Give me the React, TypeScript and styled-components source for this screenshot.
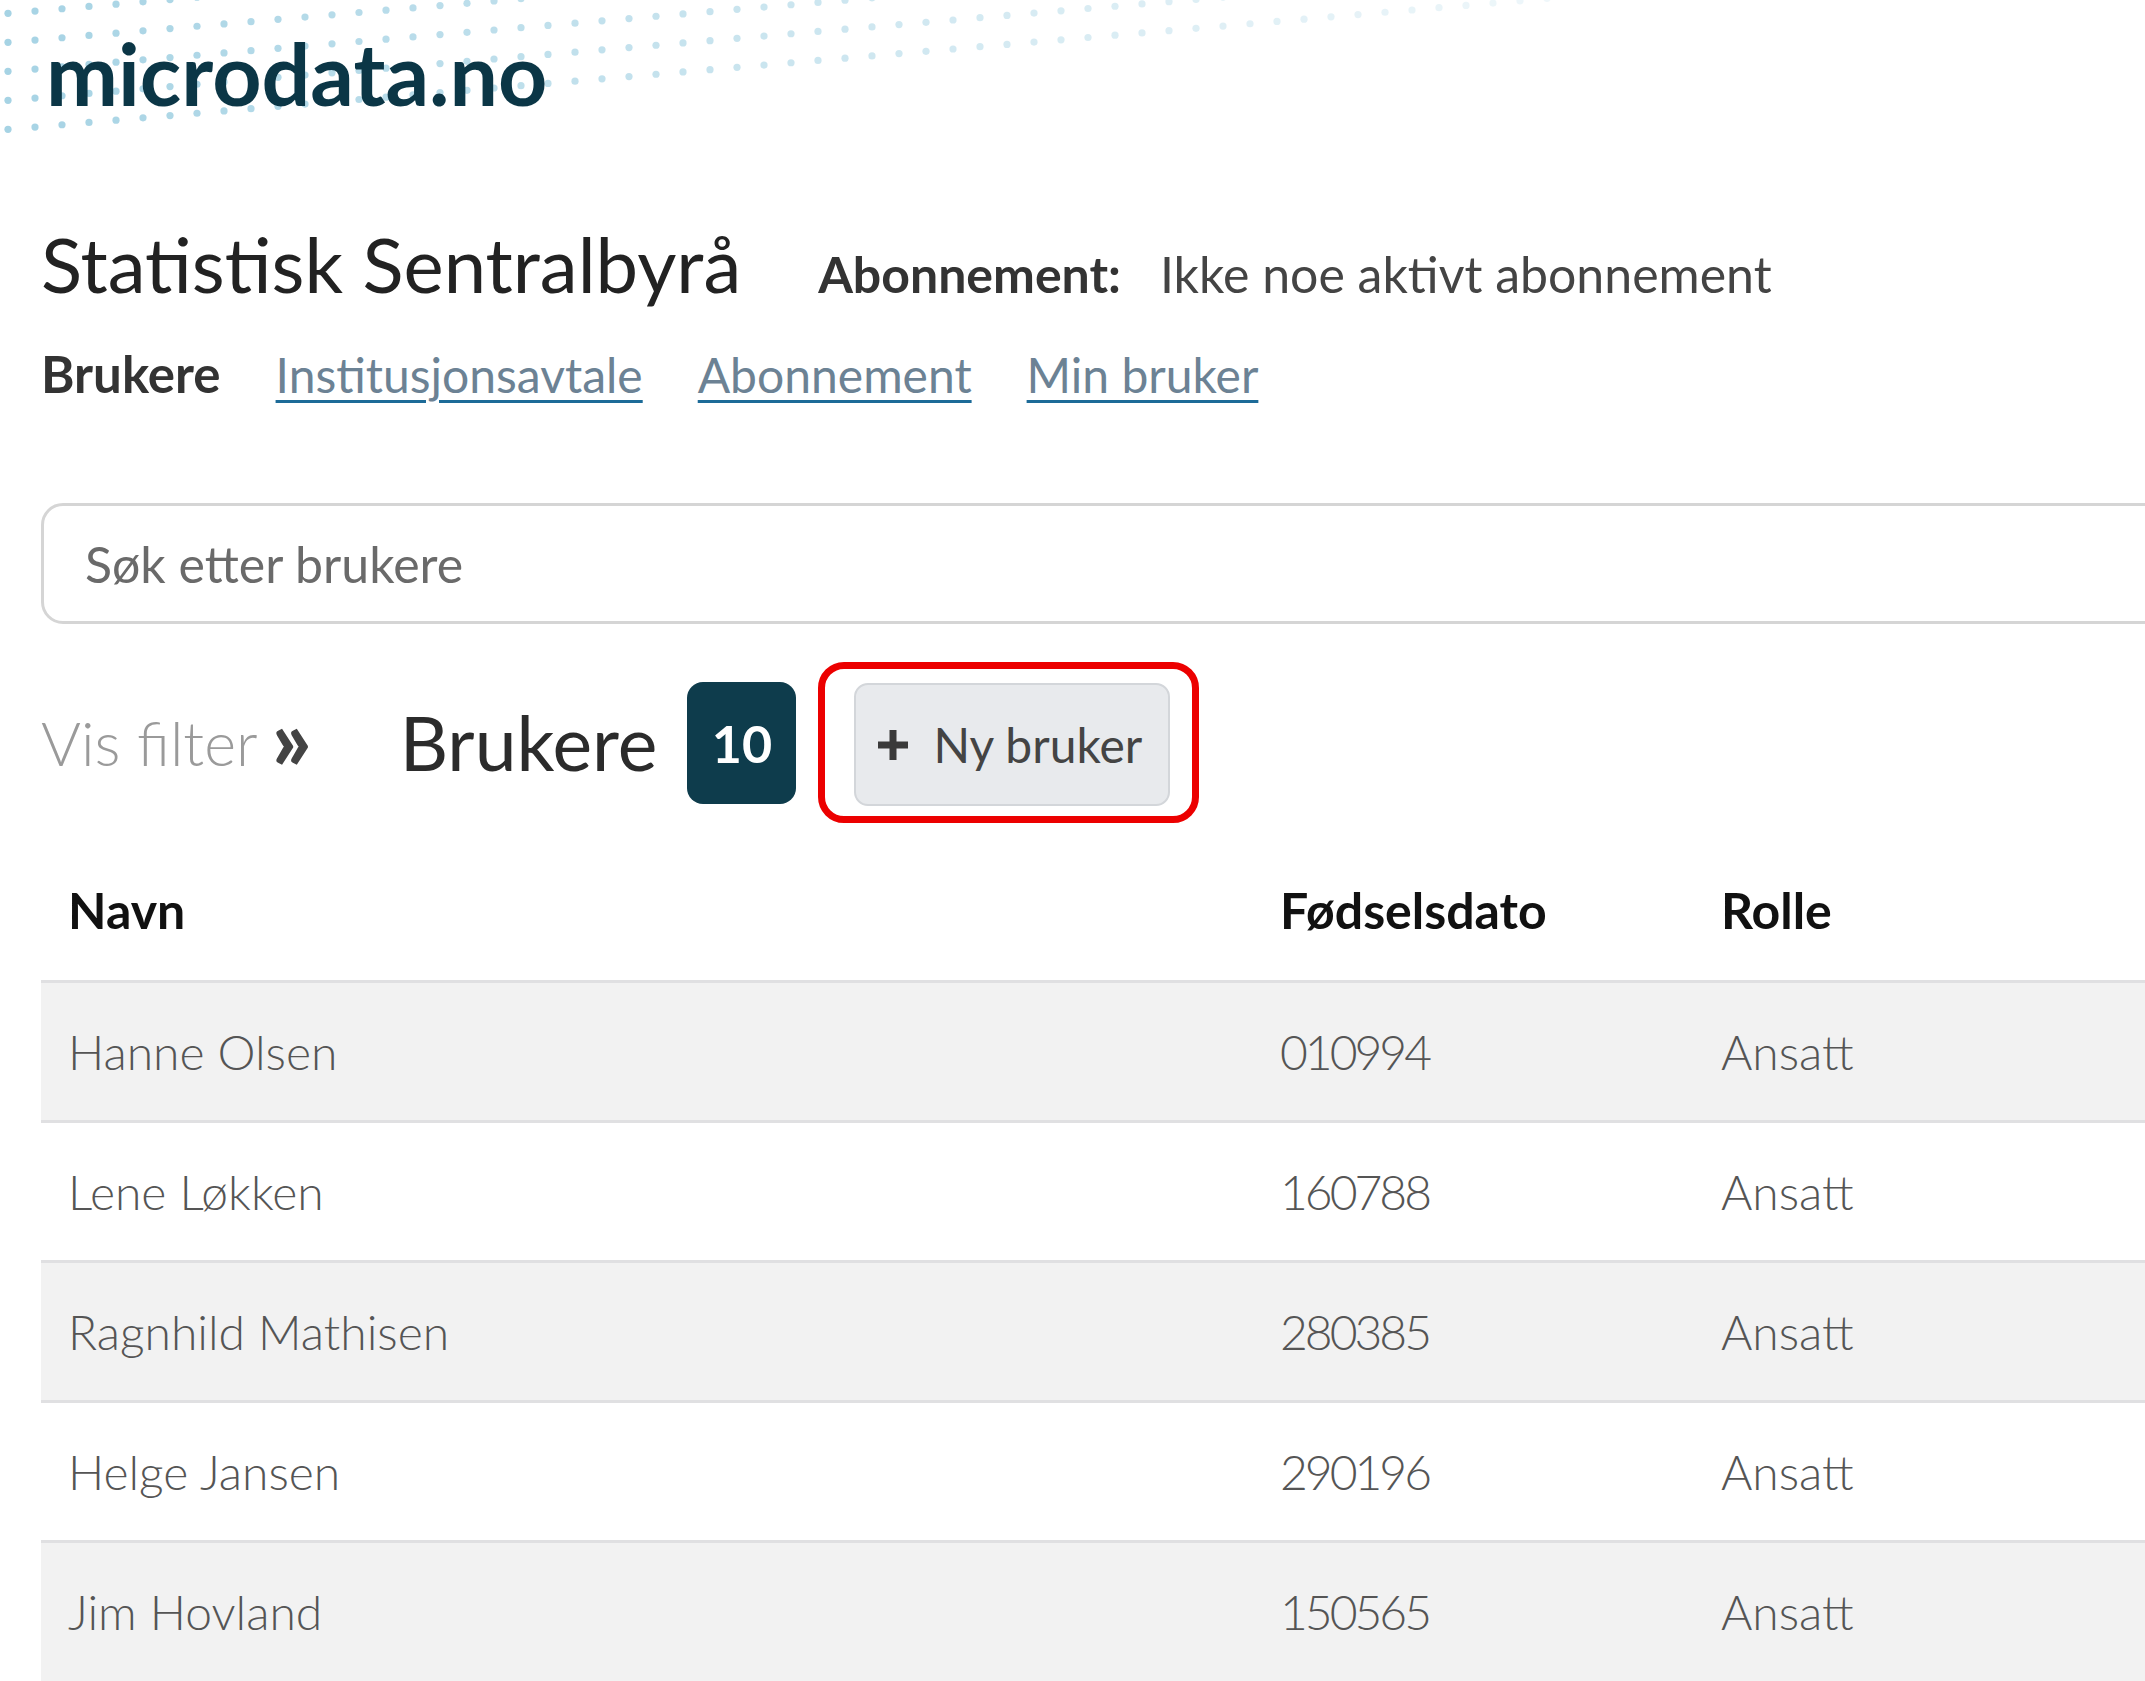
import React from "react";
import styled, { createGlobalStyle } from "styled-components";

const GlobalStyle = createGlobalStyle`
  html, body { margin: 0; padding: 0; background: #ffffff; overflow: hidden; }
  body { font-family: Lato, "Open Sans", sans-serif; color: #333; }
  * { box-sizing: border-box; }
`;

const Page = styled.div`
  position: relative;
  width: 2400px;
  height: 1681px;
  padding-left: 41px;
  overflow: hidden;
`;

const DotsLayer = styled.svg`
  position: absolute;
  top: 0;
  left: 0;
  pointer-events: none;
`;

const Header = styled.header`
  position: relative;
  padding-top: 30px;
  padding-left: 5px;
`;

const Logo = styled.div`
  font-family: Lato, sans-serif;
  font-weight: 700;
  font-size: 86px;
  line-height: 1;
  color: #0b3646;
`;

const OrgRow = styled.div`
  display: flex;
  align-items: baseline;
  margin-top: 110px;
`;

const OrgTitle = styled.h1`
  margin: 0 77px 0 0;
  font-size: 76px;
  font-weight: 400;
  line-height: 1;
  color: #222;
`;

const SubLabel = styled.span`
  font-size: 50px;
  font-weight: 700;
  color: #333;
  line-height: 1;
`;

const SubValue = styled.span`
  margin-left: 39px;
  font-size: 50px;
  font-weight: 400;
  color: #444;
  line-height: 1;
`;

const Nav = styled.nav`
  display: flex;
  align-items: baseline;
  gap: 55px;
  margin-top: 46px;
  line-height: 1;
`;

const NavItem = styled.a<{ $active?: boolean }>`
  font-size: ${(p) => (p.$active ? "51px" : "48px")};
  font-weight: ${(p) => (p.$active ? 700 : 400)};
  color: ${(p) => (p.$active ? "#333" : "#6c8294")};
  text-decoration: ${(p) => (p.$active ? "none" : "underline")};
  text-decoration-color: #1d6b98;
  text-decoration-thickness: 3px;
  text-underline-offset: 7px;
  cursor: pointer;
`;

const Search = styled.input`
  display: block;
  margin-top: 104px;
  width: 100%;
  height: 121px;
  border: 3px solid #d5d5d5;
  border-radius: 22px;
  padding: 0 0 0 41px;
  font-family: Lato, sans-serif;
  font-size: 50px;
  color: #333;
  outline: none;
  background: #fff;
  &::placeholder {
    color: #6a6a6a;
  }
`;

const FilterRow = styled.div`
  display: flex;
  align-items: center;
  margin-top: 38px;
  height: 161px;
`;

const VisFilter = styled.span`
  display: flex;
  align-items: center;
  font-size: 61px;
  font-weight: 300;
  color: #9a9a9a;
  line-height: 1;
`;

const Chevrons = styled.span`
  margin-left: 14px;
  font-size: 86px;
  font-weight: 900;
  color: #444;
  position: relative;
  top: -6px;
`;

const ListTitle = styled.h2`
  margin: 0 0 0 88px;
  font-size: 75px;
  font-weight: 400;
  color: #2b2b2b;
  line-height: 1;
`;

const Badge = styled.span`
  margin-left: 30px;
  width: 109px;
  height: 122px;
  border-radius: 16px;
  background: #0e3c4c;
  color: #fff;
  display: flex;
  align-items: center;
  justify-content: center;
  font-size: 52px;
  font-weight: 700;
`;

const Highlight = styled.div`
  margin-left: 22px;
  border: 7px solid #ec0000;
  border-radius: 26px;
  padding: 14px 22px 10px 29px;
`;

const NewButton = styled.button`
  width: 316px;
  height: 123px;
  background: #e8eaed;
  border: 2px solid #d3d6da;
  border-radius: 14px;
  display: flex;
  align-items: center;
  gap: 22px;
  padding: 0 0 0 19px;
  font-family: Lato, sans-serif;
  font-size: 48px;
  color: #444;
  cursor: pointer;
`;

const Table = styled.table`
  margin-top: 17px;
  width: 100%;
  border-collapse: collapse;
  table-layout: fixed;
`;

const HeadCell = styled.th`
  padding: 45px 0 45px 27px;
  font-size: 50px;
  font-weight: 700;
  color: #111;
  line-height: 1;
  text-align: left;
`;

const Row = styled.tr<{ $shaded: boolean }>`
  height: 140px;
  border-top: 3px solid #e0e0e2;
  background: ${(p) => (p.$shaded ? "#f2f2f2" : "#ffffff")};
`;

const Cell = styled.td<{ $digits?: boolean }>`
  padding: 0 0 0 27px;
  font-size: 48px;
  font-weight: 300;
  color: #555;
  line-height: 1;
  vertical-align: middle;
  letter-spacing: ${(p) => (p.$digits ? "-3px" : "0")};
`;

function Dots() {
  const dots: React.ReactElement[] = [];
  const rowStarts = [-16, 14, 43, 72, 101, 130];
  rowStarts.forEach((y0, r) => {
    for (let i = 0; i < 64; i++) {
      const x = 8 + i * 27;
      const y = y0 - 0.085 * x;
      if (y < -4 || y > 160) continue;
      const op = Math.max(0.15, 1 - x / 1900);
      dots.push(<circle key={`${r}-${i}`} cx={x} cy={y} r={3.6} fill="#a6d3e4" opacity={op} />);
    }
  });
  return (
    <DotsLayer width="1800" height="170" viewBox="0 0 1800 170">
      {dots}
    </DotsLayer>
  );
}

const PlusIcon = () => (
  <svg width="36" height="36" viewBox="0 0 36 36">
    <path d="M18 3 V33 M3 18 H33" stroke="#3a3a3a" strokeWidth="7" strokeLinecap="butt" />
  </svg>
);

const users = [
  { name: "Hanne Olsen", dob: "010994", role: "Ansatt" },
  { name: "Lene Løkken", dob: "160788", role: "Ansatt" },
  { name: "Ragnhild Mathisen", dob: "280385", role: "Ansatt" },
  { name: "Helge Jansen", dob: "290196", role: "Ansatt" },
  { name: "Jim Hovland", dob: "150565", role: "Ansatt" },
];

export default function App() {
  return (
    <>
      <GlobalStyle />
      <Page>
        <Dots />
        <Header>
          <Logo>microdata.no</Logo>
        </Header>
        <OrgRow>
          <OrgTitle>Statistisk Sentralbyrå</OrgTitle>
          <SubLabel>Abonnement:</SubLabel>
          <SubValue>Ikke noe aktivt abonnement</SubValue>
        </OrgRow>
        <Nav>
          <NavItem $active>Brukere</NavItem>
          <NavItem>Institusjonsavtale</NavItem>
          <NavItem>Abonnement</NavItem>
          <NavItem>Min bruker</NavItem>
        </Nav>
        <Search placeholder="Søk etter brukere" />
        <FilterRow>
          <VisFilter>
            Vis filter
            <Chevrons>»</Chevrons>
          </VisFilter>
          <ListTitle>Brukere</ListTitle>
          <Badge>10</Badge>
          <Highlight>
            <NewButton>
              <PlusIcon />
              Ny bruker
            </NewButton>
          </Highlight>
        </FilterRow>
        <Table>
          <colgroup>
            <col style={{ width: 1212 }} />
            <col style={{ width: 441 }} />
            <col />
          </colgroup>
          <thead>
            <tr>
              <HeadCell>Navn</HeadCell>
              <HeadCell>Fødselsdato</HeadCell>
              <HeadCell>Rolle</HeadCell>
            </tr>
          </thead>
          <tbody>
            {users.map((u, i) => (
              <Row key={u.name} $shaded={i % 2 === 0}>
                <Cell>{u.name}</Cell>
                <Cell $digits>{u.dob}</Cell>
                <Cell>{u.role}</Cell>
              </Row>
            ))}
          </tbody>
        </Table>
      </Page>
    </>
  );
}
